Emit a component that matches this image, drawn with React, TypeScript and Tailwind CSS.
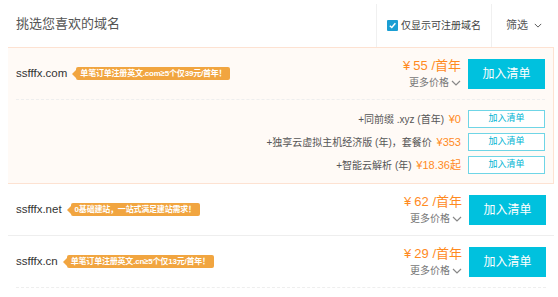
import React from "react";

const FONT = '"Liberation Sans", "Noto Sans CJK SC", sans-serif';

function Chevron({ className = "" }: { className?: string }) {
  return (
    <svg viewBox="0 0 10 6" className={className} fill="none" stroke="currentColor" strokeWidth="1.2">
      <path d="M1 1 L5 5 L9 1" />
    </svg>
  );
}

function Tag({ text }: { text: string }) {
  return (
    <div className="relative ml-[5px] flex items-center">
      <div className="h-0 w-0 border-y-[4px] border-r-[4px] border-y-transparent border-r-[#f1a540]" />
      <div className="h-[13px] rounded-[2px] bg-[#f1a540] px-[4px] text-[8px] font-bold leading-[13px] tracking-[-0.2px] text-white whitespace-nowrap">
        {text}
      </div>
    </div>
  );
}

function PriceBlock({ price }: { price: string }) {
  return (
    <div className="flex flex-col items-end">
      <div className="text-[13px] leading-[16px] text-[#ff8a1e] whitespace-nowrap">
        ¥<span className="ml-[3px]">{price}</span> /首年
      </div>
      <div className="mt-[2px] flex items-center text-[10px] leading-[14px] text-[#777]">
        更多价格
        <Chevron className="ml-[2px] h-[6px] w-[10px] text-[#888]" />
      </div>
    </div>
  );
}

function MainRow({ domain, tag, price }: { domain: string; tag: string; price: string }) {
  return (
    <div className="flex h-[51px] items-center pl-[8px] pr-[8px]">
      <div className="text-[11.5px] text-[#333]">{domain}</div>
      <Tag text={tag} />
      <div className="ml-auto flex items-center gap-[7px]">
        <PriceBlock price={price} />
        <button className="h-[30px] w-[77px] bg-[#00c1de] text-[12px] text-white">加入清单</button>
      </div>
    </div>
  );
}

function SubRow({ label, price }: { label: string; price: string }) {
  return (
    <div className="flex h-[18px] items-center justify-end gap-[7px]">
      <div className="text-[10px] text-[#555] whitespace-nowrap">
        {label} <span className="ml-[2px] text-[11px] text-[#ff8a1e]">{price}</span>
      </div>
      <button className="h-[18px] w-[77px] border border-[#6fd5e6] bg-white text-[9px] text-[#00b4d2]">
        加入清单
      </button>
    </div>
  );
}

export default function App() {
  return (
    <div className="h-[297px] w-[558px] overflow-hidden bg-white" style={{ fontFamily: FONT }}>
      <div className="flex h-[47px]">
        <div className="flex flex-1 items-center pl-[16px] pt-[1px] text-[13px] text-[#555]">挑选您喜欢的域名</div>
        <div className="mt-[4px] flex w-[115px] items-center border-l border-[#f0f0f0] pl-[10px]">
          <span className="flex h-[11px] w-[11px] shrink-0 items-center justify-center rounded-[1px] bg-[#1a9ed3]">
            <svg viewBox="0 0 10 10" className="h-[9px] w-[9px]" fill="none" stroke="white" strokeWidth="1.6">
              <path d="M2 5.2 L4.2 7.3 L8.2 2.6" />
            </svg>
          </span>
          <span className="ml-[3px] whitespace-nowrap text-[10px] text-[#444]">仅显示可注册域名</span>
        </div>
        <div className="mt-[4px] flex w-[67px] items-center border-l border-[#f0f0f0] pl-[14px] text-[11px] text-[#555]">
          筛选
          <Chevron className="ml-[6px] h-[5px] w-[8px] text-[#555]" />
        </div>
      </div>

      <div className="ml-[8px] mr-[4px] border-y border-r border-[#fde2d2] bg-[#fffaf6]">
        <MainRow domain="ssfffx.com" tag="单笔订单注册英文.com≥5个仅39元/首年！" price="55" />
        <div className="mx-[8px] border-t border-dashed border-[#eee]" />
        <div className="flex flex-col gap-[5px] pr-[8px] pt-[10px] pb-[9px]">
          <SubRow label="+同前缀 .xyz (首年)" price="¥0" />
          <SubRow label="+独享云虚拟主机经济版 (年)，套餐价" price="¥353" />
          <SubRow label="+智能云解析 (年)" price="¥18.36起" />
        </div>
      </div>

      <div className="ml-[8px] mr-[4px]">
        <MainRow domain="ssfffx.net" tag="0基础建站，一站式满足建站需求！" price="62" />
        <div className="border-t border-[#eee]" />
        <MainRow domain="ssfffx.cn" tag="单笔订单注册英文.cn≥5个仅13元/首年！" price="29" />
        <div className="mx-[8px] border-t border-dashed border-[#eee]" />
      </div>
    </div>
  );
}
